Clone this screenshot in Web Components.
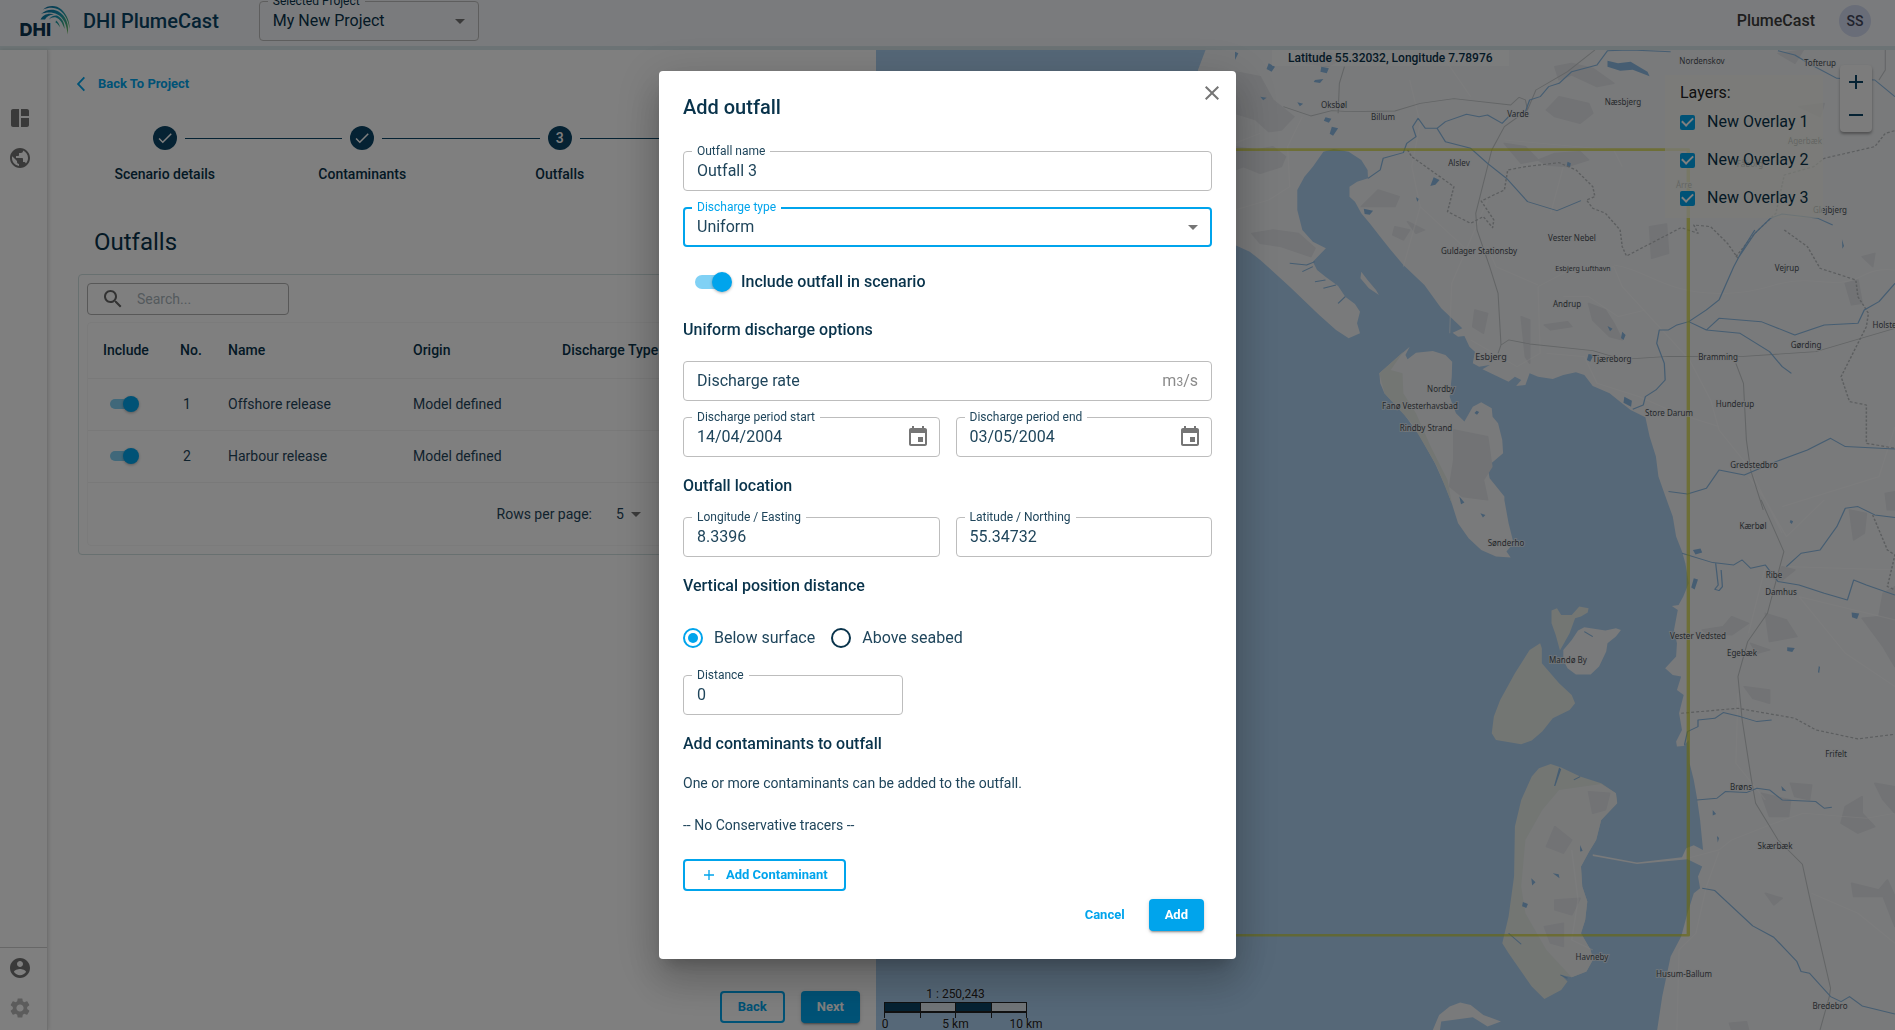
<!DOCTYPE html>
<html lang="en">
<head>
<meta charset="utf-8">
<title>DHI PlumeCast</title>
<style>
  :root {
    --ink: #09334b;
    --soft: #1f455b;
    --brand: #0b4566;
    --accent: #00a4ec;
    --icon: #757575;
    --line: #bdbdbd;
  }
  html, body { height: 100%; margin: 0; }
  body { font: 400 14px/20px Roboto, "Liberation Sans", sans-serif; color: var(--ink); background: #fff; overflow: hidden; }
</style>
</head>
<body>
<plume-app></plume-app>
<script>
const BASE = '*{box-sizing:border-box}svg{display:block}';

function define(name, html, setup) {
  const template = document.createElement('template');
  template.innerHTML = html;
  customElements.define(name, class extends HTMLElement {
    constructor() {
      super();
      this.attachShadow({ mode: 'open' }).append(template.content.cloneNode(true));
    }
    connectedCallback() { if (setup) setup(this, this.shadowRoot); }
  });
}

/* ---------- icon ---------- */
const ICONS = {
  dashboard: 'M11 21H5c-1.1 0-2-.9-2-2V5c0-1.1.9-2 2-2h6v18zm2 0h6c1.1 0 2-.9 2-2v-7h-8v9zm8-11V5c0-1.1-.9-2-2-2h-6v7h8z',
  globe: 'M12 2C6.48 2 2 6.48 2 12s4.48 10 10 10 10-4.48 10-10S17.52 2 12 2zm-1 17.93c-3.95-.49-7-3.85-7-7.93 0-.62.08-1.21.21-1.79L9 15v1c0 1.1.9 2 2 2v1.93zm6.9-2.54c-.26-.81-1-1.39-1.9-1.39h-1v-3c0-.55-.45-1-1-1H8v-2h2c.55 0 1-.45 1-1V7h2c1.1 0 2-.9 2-2v-.41c2.93 1.19 5 4.06 5 7.41 0 2.08-.8 3.97-2.1 5.39z',
  account: 'M12 2C6.48 2 2 6.48 2 12s4.48 10 10 10 10-4.48 10-10S17.52 2 12 2zm0 3c1.66 0 3 1.34 3 3s-1.34 3-3 3-3-1.34-3-3 1.34-3 3-3zm0 14.2c-2.5 0-4.71-1.28-6-3.22.03-1.99 4-3.08 6-3.08 1.99 0 5.97 1.09 6 3.08-1.29 1.94-3.5 3.22-6 3.22z',
  settings: 'M19.14 12.94c.04-.3.06-.61.06-.94 0-.32-.02-.64-.07-.94l2.03-1.58c.18-.14.23-.41.12-.61l-1.92-3.32c-.12-.22-.37-.29-.59-.22l-2.39.96c-.5-.38-1.03-.7-1.62-.94l-.36-2.54c-.04-.24-.24-.41-.48-.41h-3.84c-.24 0-.43.17-.47.41l-.36 2.54c-.59.24-1.13.57-1.62.94l-2.39-.96c-.22-.08-.47 0-.59.22L2.74 8.87c-.12.21-.08.47.12.61l2.03 1.58c-.05.3-.09.63-.09.94s.02.64.07.94l-2.03 1.58c-.18.14-.23.41-.12.61l1.92 3.32c.12.22.37.29.59.22l2.39-.96c.5.38 1.03.7 1.62.94l.36 2.54c.05.24.24.41.48.41h3.84c.24 0 .44-.17.47-.41l.36-2.54c.59-.24 1.13-.56 1.62-.94l2.39.96c.22.08.47 0 .59-.22l1.92-3.32c.12-.22.07-.47-.12-.61l-2.01-1.58zM12 15.6c-1.98 0-3.6-1.62-3.6-3.6s1.62-3.6 3.6-3.6 3.6 1.62 3.6 3.6-1.62 3.6-3.6 3.6z',
  search: 'M15.5 14h-.79l-.28-.27C15.41 12.59 16 11.11 16 9.5 16 5.91 13.09 3 9.5 3S3 5.91 3 9.5 5.91 16 9.5 16c1.61 0 3.09-.59 4.23-1.57l.27.28v.79l5 4.99L20.49 19l-4.99-5zm-6 0C7.01 14 5 11.99 5 9.5S7.01 5 9.5 5 14 7.01 14 9.5 11.99 14 9.5 14z',
  calendar: 'M17 12h-5v5h5v-5zM16 1v2H8V1H6v2H5c-1.11 0-1.99.9-1.99 2L3 19c0 1.1.89 2 2 2h14c1.1 0 2-.9 2-2V5c0-1.1-.9-2-2-2h-1V1h-2zm3 18H5V8h14v11z',
  arrow: 'M7 10l5 5 5-5z',
  chevron: 'M15.200 3.400L16.800 4.900 10 12l6.800 7.100-1.600 1.500L7 12z',
  check: 'M9 16.2L4.8 12l-1.4 1.4L9 19 21 7l-1.4-1.4z',
  plus: 'M13 4.500h-2V11H4.500v2H11v6.500h2V13h6.500v-2H13z',
  close: 'M19 6.41L17.59 5 12 10.59 6.41 5 5 6.41 10.59 12 5 17.59 6.41 19 12 13.41 17.59 19 19 17.59 13.41 12z'
};
define('ui-icon', `<style>${BASE}:host{display:inline-block;width:24px;height:24px;flex:none}svg{width:100%;height:100%;fill:currentColor}</style><svg viewBox="0 0 24 24" aria-hidden="true"><path/></svg>`,
  (host, root) => root.querySelector('path').setAttribute('d', ICONS[host.getAttribute('name')]));

/* ---------- outlined field ---------- */
define('ui-field', `<style>${BASE}
  :host{display:block;position:relative;height:40px;min-width:0;flex:1;color:var(--soft)}
  .box{display:flex;align-items:center;height:100%;border:1px solid var(--line);border-radius:4px;padding:0 13px}
  :host([focused]) .box{border:2px solid var(--accent);padding:0 12px}
  label{position:absolute;left:9px;top:-6px;padding:0 5px;font-size:12px;line-height:12px;background:var(--field-bg,#fff);white-space:nowrap}
  label:empty{display:none}
  :host([focused]) label{color:var(--accent)}
  input,select{all:unset;flex:1;min-width:0;font:inherit;font-size:16px;line-height:24px;color:inherit}
  input::placeholder{color:inherit;opacity:1}
  ui-icon{color:var(--icon)}
  ui-icon[name=arrow]{margin-right:-7px}
  ui-icon[name=calendar]{margin-right:-4px}
  ::slotted(*){color:#8b8b8b;font-size:16px}
</style><div class="box"><slot></slot></div><label for="c"></label>`,
  (host, root) => {
    const a = n => host.getAttribute(n) || '';
    root.querySelector('label').textContent = a('label');
    let control;
    if (host.hasAttribute('select')) {
      control = document.createElement('select');
      control.add(new Option(a('value')));
    } else {
      control = document.createElement('input');
      control.type = 'text';
      control.value = a('value');
      control.placeholder = a('hint');
      if (a('hint')) control.setAttribute('aria-label', a('hint'));
    }
    control.id = 'c';
    const box = root.querySelector('.box');
    box.prepend(control);
    const icon = host.hasAttribute('select') ? 'arrow' : a('icon');
    if (icon) box.insertAdjacentHTML('beforeend', `<ui-icon name="${icon}"></ui-icon>`);
  });

/* ---------- button ---------- */
define('ui-button', `<style>${BASE}
  :host{display:inline-block;flex:none}
  button{display:flex;align-items:center;justify-content:center;height:32px;padding:0 16px;border:2px solid transparent;border-radius:4px;background:none;color:var(--accent);font:700 13px/20px Roboto,sans-serif;cursor:pointer}
  :host([kind=outlined]) button{border-color:var(--accent)}
  :host([kind=filled]) button{background:var(--accent);color:#fff;padding:0 14px;box-shadow:0 3px 1px -2px rgba(0,0,0,.2),0 2px 2px rgba(0,0,0,.14),0 1px 5px rgba(0,0,0,.12)}
  ::slotted(ui-icon){width:16px;height:16px;margin-right:9px}
</style><button type="button"><slot></slot></button>`);

/* ---------- switch ---------- */
define('ui-switch', `<style>${BASE}
  :host{display:block}
  label{display:flex;align-items:center;font-weight:500;font-size:16px;line-height:24px}
  input{appearance:none;position:relative;flex:none;width:34px;height:14px;margin:12px;border-radius:7px;background:#80d1f5}
  input::before{content:"";position:absolute;right:-3px;top:-3px;width:20px;height:20px;border-radius:50%;background:var(--accent);box-shadow:0 1px 3px rgba(0,0,0,.3)}
  :host([small]) input{width:26px;height:10px;margin:7px}
  :host([small]) input::before{width:16px;height:16px}
</style><label><input type="checkbox" checked><slot></slot></label>`,
  (host, root) => { if (host.title) root.querySelector('input').setAttribute('aria-label', host.title); });

/* ---------- radio ---------- */
define('ui-radio', `<style>${BASE}
  :host{display:block;color:var(--soft)}
  label{display:flex;align-items:center;gap:11px;font-size:16px;line-height:24px}
  input{appearance:none;display:grid;place-items:center;width:20px;height:20px;margin:0;border:2px solid var(--ink);border-radius:50%}
  input:checked{border-color:var(--accent)}
  input:checked::before{content:"";width:10px;height:10px;border-radius:50%;background:var(--accent)}
</style><label><input type="radio"><slot></slot></label>`,
  (host, root) => { root.querySelector('input').checked = host.hasAttribute('checked'); });

/* ---------- header ---------- */
define('app-header', `<style>${BASE}
  :host{display:flex;align-items:center;height:50px;padding:0 24px 4px 20px;background:#f4f7fa;border-bottom:4px solid #d9e7ea;overflow:hidden;--field-bg:#f4f7fa}
  h1{margin:0 40px 0 13px;font-size:20px;line-height:24px;font-weight:500;color:var(--brand)}
  ui-field{flex:none;width:220px;--soft:#09334b}
  nav{margin-left:auto;display:flex;align-items:center;gap:24px;font-size:16px;font-weight:500;color:#3c3c3c}
  .avatar{display:grid;place-items:center;width:32px;height:32px;border:0;padding:0;border-radius:50%;background:#d3daf0;color:#43475c;font:500 14px/20px Roboto,sans-serif}
</style>
<svg width="50" height="34" viewBox="20 4 50 34" role="img" aria-label="DHI">
  <defs><linearGradient id="g" gradientUnits="userSpaceOnUse" x1="40" y1="10" x2="70" y2="34"><stop offset="0" stop-color="#0a6a9c"/><stop offset=".45" stop-color="#1496b8"/><stop offset=".7" stop-color="#3aa98a"/><stop offset="1" stop-color="#64b33a"/></linearGradient></defs>
  <g fill="url(#g)">
    <path d="M43 9.5C48 5.2 56 4.800 61.500 9.500 67 14.500 69.800 22 69.600 29 68.500 21.500 65.500 14.500 60 10.500 55 7 49 7.200 43 9.500z"/>
    <path d="M41 14C46 9.500 53 8.500 58.500 11.500 65.500 15.500 69.500 24 67.500 34.500 67 25 63.500 17.500 57.500 14.500 52 11.800 46 12.200 41 14z"/>
    <path d="M40.500 19.500C43 14.500 49 12.500 54 14.500 49.500 15 46.500 16.500 45 19.500z"/>
    <path d="M49 19.500C50.500 16.500 54 15 57 15.500 63 18.500 64.800 24 64.500 29 62.500 23 60 19 56 17.500 53.500 17 51 17.500 49 19.500z"/>
    <path d="M56 20.500C57.500 21.500 59.500 24 60 27.500 58.500 25 57.500 23.500 55.500 22.500z"/>
  </g>
  <text x="19.500" y="35.500" font-family="Inter" font-weight="800" font-size="18" fill="#0a3550">DHI</text>
</svg>
<h1>DHI PlumeCast</h1>
<ui-field label="Selected Project" value="My New Project" select></ui-field>
<nav><span>PlumeCast</span><button class="avatar" type="button">SS</button></nav>`);

/* ---------- side rail ---------- */
define('side-rail', `<style>${BASE}
  :host{display:flex;flex-direction:column;border-right:1px solid #e0e0e0;box-shadow:1px 0 4px rgba(0,0,0,.12);color:var(--icon);z-index:1}
  div{display:flex;flex-direction:column;gap:16px;padding:56px 8px 0}
  .end{margin-top:auto;padding-top:8px;padding-bottom:10px;border-top:1px solid #cfcfcf}
  button{all:unset;display:block;height:24px}
  button[disabled]{color:#b8b8b8}
</style>
<div><button type="button" aria-label="Projects"><ui-icon name="dashboard"></ui-icon></button><button type="button" aria-label="World"><ui-icon name="globe"></ui-icon></button></div>
<div class="end"><button type="button" aria-label="Account"><ui-icon name="account"></ui-icon></button><button type="button" disabled aria-label="Settings"><ui-icon name="settings"></ui-icon></button></div>`);

/* ---------- stepper ---------- */
define('step-item', `<style>${BASE}
  :host{flex:1;display:flex;flex-direction:column;align-items:center;gap:14px;font-weight:500}
  .row{display:flex;align-items:center;gap:8px;align-self:stretch}
  .row::before,.row::after{content:"";flex:1;height:1px;background:var(--brand)}
  :host([first]) .row::before,:host([last]) .row::after{background:none}
  i{display:grid;place-items:center;width:24px;height:24px;border-radius:50%;background:var(--brand);color:#fff;font-style:normal;font-size:14px}
  i ui-icon{width:18px;height:18px}
</style><div class="row"><i></i></div><slot></slot>`,
  (host, root) => {
    const n = host.getAttribute('n');
    root.querySelector('i').innerHTML = n ? n : '<ui-icon name="check"></ui-icon>';
  });

/* ---------- outfall table ---------- */
define('outfall-table', `<style>${BASE}
  :host{display:block;border:1px solid #d0e0e0;border-radius:4px;padding:8px}
  .search{display:flex;align-items:center;gap:12px;width:202px;height:32px;padding:0 13px;border:1px solid #b0b0b0;border-radius:4px;color:#666}
  input{all:unset;flex:1;min-width:0;font-size:14px}
  input::placeholder{color:#a9b4bb;opacity:1}
  .frame{margin-top:7px;border:1px solid #f6f6f6;border-radius:4px}
  table{width:100%;table-layout:fixed;border-collapse:collapse}
  th,td{height:52px;padding:0 0 0 15px;text-align:left;border-bottom:1px solid #f3f3f3;white-space:nowrap;font-weight:400}
  th{height:55px;font-weight:500}
  td{color:var(--soft)}
  td:nth-child(2){padding-left:18px}
  .foot{display:flex;align-items:center;justify-content:flex-end;height:62px;padding-right:202px;gap:24px;color:var(--soft)}
  .foot span{display:flex;align-items:center}
  select{all:unset;width:8px}
  .foot ui-icon{color:var(--icon)}
</style>
<div class="search"><ui-icon name="search"></ui-icon><input type="text" placeholder="Search..." aria-label="Search"></div>
<div class="frame">
<table>
  <colgroup><col style="width:77px"><col style="width:48px"><col style="width:185px"><col style="width:149px"><col></colgroup>
  <thead><tr><th>Include</th><th>No.</th><th>Name</th><th>Origin</th><th>Discharge Type</th></tr></thead>
  <tbody>
    <tr><td><ui-switch small title="Include Offshore release"></ui-switch></td><td>1</td><td>Offshore release</td><td>Model defined</td><td></td></tr>
    <tr><td><ui-switch small title="Include Harbour release"></ui-switch></td><td>2</td><td>Harbour release</td><td>Model defined</td><td></td></tr>
  </tbody>
</table>
<div class="foot"><label for="rows">Rows per page:</label><span><select id="rows"><option>5</option></select><ui-icon name="arrow"></ui-icon></span></div>
</div>`);

/* ---------- scenario panel ---------- */
define('scenario-panel', `<style>${BASE}
  :host{display:flex;flex-direction:column;padding:20px 0 7px}
  a{display:flex;align-items:center;gap:7px;height:28px;margin-left:23px;color:var(--accent);font-weight:700;font-size:13px;text-decoration:none}
  a ui-icon{width:20px;height:20px}
  .steps{display:flex;margin:28px 20px 0 18px}
  h2{margin:42px 46px 16px;font-size:24px;line-height:32px;font-weight:400}
  outfall-table{margin:0 16px 0 30px}
  footer{display:flex;justify-content:flex-end;gap:16px;margin:auto 16px 0}
</style>
<a href="#project"><ui-icon name="chevron"></ui-icon>Back To Project</a>
<div class="steps"><step-item first>Scenario details</step-item><step-item>Contaminants</step-item><step-item n="3">Outfalls</step-item><step-item n="4" last></step-item></div>
<h2>Outfalls</h2>
<outfall-table></outfall-table>
<footer><ui-button kind="outlined">Back</ui-button><ui-button kind="filled">Next</ui-button></footer>`);

/* ---------- map ---------- */
const TOWNS = [
  ['Nordenskov',1702,64],['Tofterup',1820,66],['Næsbjerg',1623,105],['Oksbøl',1334,108],['Billum',1383,120],['Varde',1518,117],
  ['Agerbæk',1805,144],['Alslev',1459,166],['Fåborg',1750,167],['Årre',1684,188],['Glejbjerg',1830,213],['Vester Nebel',1572,241],['Guldager Stationsby',1479,254],
  ['Esbjerg Lufthavn',1583,271,7],['Vejrup',1787,271],['Andrup',1567,307],['Holsted',1887,328],['Gørding',1806,348],['Esbjerg',1491,360,9],
  ['Tjæreborg',1612,362],['Bramming',1718,360],['Nordby',1441,392],['Hunderup',1735,407],['Fanø Vesterhavsbad',1420,409],['Store Darum',1669,416],
  ['Rindby Strand',1426,431],['Gredstedbro',1754,468],['Kærbøl',1753,529],['Sønderho',1506,546],['Ribe',1774,578],['Damhus',1781,595],
  ['Vester Vedsted',1698,639],['Egebæk',1742,656],['Mandø By',1568,663],['Frifelt',1836,757],['Brøns',1741,790],['Skærbæk',1775,849],
  ['Havneby',1592,960],['Husum-Ballum',1684,977],['Bredebro',1830,1009]
];
define('map-view', `<style>${BASE}
  :host{display:block;position:relative;overflow:hidden}
  .map{position:absolute;inset:0;width:100%;height:100%}
  .map text{font-family:"Noto Sans",sans-serif;text-anchor:middle;fill:#4b5157;paint-order:stroke;stroke:#f1f3f5;stroke-width:2px;stroke-opacity:.7}
  .pos{position:absolute;top:0;left:396px;padding:0 16px;height:16px;font:500 12px/16px Roboto,sans-serif;background:rgba(255,255,255,.5)}
  .layers{position:absolute;top:25px;right:72px;padding:7px 15px 0;width:158px;height:143px;background:rgba(246,248,240,.72);color:#222;font-size:16px;white-space:nowrap}
  .layers div{line-height:21px}
  .layers label{display:flex;align-items:center;gap:12px;height:38px;color:var(--ink);font-size:16px}
  .layers input{appearance:none;display:grid;place-items:center;flex:none;width:15px;height:15px;margin:0;border-radius:2px;background:var(--accent)}
  .layers input::before{content:"";width:5px;height:9px;margin-top:-3px;border:solid #fff;border-width:0 2px 2px 0;transform:rotate(45deg)}
  .zoom{position:absolute;top:15px;right:23px;display:flex;flex-direction:column;width:32px;height:67px;border-radius:4px;background:#f8f8f8;box-shadow:0 2px 3px rgba(0,0,0,.35)}
  .zoom button{all:unset;flex:1;display:grid;place-items:center}
  .scale{position:absolute;left:8px;bottom:0;width:143px;height:44px;text-align:center;color:#222;font:400 12px/16px Roboto,sans-serif;text-shadow:0 0 2px #cde}
  .bar{display:flex;height:11px;border:1px solid #222;border-width:1px 0 2px;background:#e3ebf0}
  .bar i{flex:1;border-left:1px solid #222;height:15px;background:linear-gradient(#e3ebf0 8px,transparent 8px)}
  .bar i:nth-child(odd){background:linear-gradient(var(--brand) 8px,transparent 8px)}
  .bar i:last-child{border-right:1px solid #222}
  .km{display:flex;justify-content:space-between;margin:5px -20px 0;line-height:12px}
  .km span{width:42px}
</style>
<svg class="map" viewBox="876 50 1019 980" preserveAspectRatio="xMidYMid slice">
  <rect x="876" y="50" width="1019" height="980" fill="#acd0f0"/>
  <g transform="translate(1235 0) scale(.4209 .3333)" stroke-linejoin="round">
    <path fill="#f2f4f6" d="M-70 150L-88 210-60 500-30 715 5 738 35 755 60 780 130 860 200 945 240 990 270 1015 297 1000 290 970 297 935 285 912 262 890 245 858 215 830 195 810 185 785 216 745 185 725 160 690 148 630 148 570 165 530 185 500 210 455 235 447 270 455 300 480 315 510 316 535 290 545 272 560 272 590 285 605 300 640 320 670 345 710 370 750 400 795 450 855 490 925 540 985 517 998 530 1010 545 1008 557 1040 570 1055 565 1090 580 1100 605 1095 588 1108 650 1145 665 1130 680 1140 668 1158 690 1155 700 1120 720 1130 755 1137 780 1125 810 1117 830 1125 850 1158 890 1180 915 1205 940 1230 975 1252 985 1310 1000 1370 1006 1430 1020 1480 1030 1515 1040 1550 1048 1610 1062 1655 1070 1690 1078 1750 1065 1790 1054 1815 1038 1818 1052 1830 1043 1890 1050 1930 1048 1970 1022 2005 1040 2025 1060 2030 1050 2070 1066 2085 1055 2140 1062 2190 1048 2225 1050 2240 1066 2238 1078 2220 1080 2290 1090 2340 1097 2390 1105 2460 1112 2550 1090 2536 1072 2545 1062 2572 955 2588 850 2563 850 2568 955 2592 1075 2578 1110 2600 1100 2630 1105 2665 1090 2680 1075 2740 1060 2810 1035 2870 1025 2930 1015 2990 1003 3090 1575 3090 1575 150z"/>
    <path fill="#f2f4f6" d="M415 1040L343 1120 345 1150 355 1180 400 1240 440 1310 475 1390 500 1460 515 1510 530 1570 555 1615 585 1650 620 1670 655 1673 645 1655 655 1640 660 1620 650 1570 640 1500 640 1490 605 1435 600 1400 637 1360 635 1320 625 1270 612 1250 610 1225 585 1207 565 1220 545 1265 525 1240 510 1190 515 1130 516 1085 500 1065 470 1053 430 1058 410 1078 405 1065zM300 815L315 840 335 870 342 885 318 865 298 835z"/>
    <path fill="#e6ece7" d="M400 1055L343 1120 355 1180 420 1270 480 1400 515 1510 505 1440 465 1340 430 1240 400 1180 398 1120 370 1110zM765 1825L775 1845 800 1845 818 1820 840 1825 838 1838 822 1850 808 1855 795 1900 772 1952 762 1905 752 1870 752 1832zM725 1930L729 1945 729 1990 770 2050 800 2085 808 2110 795 2130 755 2155 730 2195 705 2222 680 2233 620 2220 610 2200 615 2150 630 2100 665 2020 700 1950zM750 2292L775 2303 820 2330 870 2350 905 2380 908 2410 870 2460 858 2520 840 2558 822 2600 825 2660 837 2705 832 2760 822 2800 845 2850 850 2880 835 2915 800 2932 775 2925 790 2945 775 2970 735 2997 705 2960 650 2860 635 2830 650 2750 663 2630 665 2480 680 2400 705 2330 722 2305z"/>
    <path fill="#f2f4f6" d="M830 1882L880 1892 905 1885 917 1890 905 1910 885 1930 882 1955 865 2000 845 2024 810 2024 790 2005 780 1980 780 1950 800 1920 815 1892zM470 3090L485 3045 510 3020 535 3008 560 3015 590 3045 632 3065 600 3080 565 3052 490 3065 487 3090z"/>
    <path fill="#f0f2f3" d="M870 2352L905 2380 908 2410 870 2460 858 2520 840 2558 822 2600 825 2660 837 2705 832 2760 822 2800 845 2850 850 2880 835 2915 800 2932 740 2850 690 2740 680 2660 690 2520 730 2430 770 2370z"/>
    <g fill="#e4e6ea">
      <path d="M0 215L60 230 90 300 140 350 110 390 80 395 50 360 0 340zM0 440L50 450 90 440 120 470 110 500 60 520 20 500 0 510zM40 700L90 690 150 700 190 745 180 770 110 740 60 730zM160 165L230 160 250 180 220 200 170 190zM740 330L770 290 840 310 850 340 820 370 760 350zM640 430L690 440 720 480 680 490zM720 480L760 460 820 455 840 480 790 500 740 495zM760 200L800 190 850 205 900 250 860 260 800 225 770 240zM300 620L340 570 390 590 380 620zM380 680L415 690 400 720 375 705zM410 665L450 690 430 700zM985 680L1025 672 1030 760 990 775zM840 910L880 930 900 970 920 1020 890 1010 850 960zM735 975L790 965 800 980 750 990zM680 950L700 960 700 1090 690 1070zM570 930L600 940 590 1000 565 980zM520 1290L600 1310 610 1400 590 1440 600 1500 540 1490 510 1460 520 1380zM1450 850L1480 840 1490 910 1465 915zM1460 1530L1500 1540 1495 1600 1470 1620zM1110 1890L1160 1880 1180 1850 1220 1870 1180 1905 1120 1900zM1260 1840L1310 1860 1335 1910 1270 1925zM1210 2060L1270 2070 1270 2110 1230 2095zM1540 1780L1568 1760 1568 2000 1540 1940 1490 1855 1530 1850zM1225 1930L1270 1950 1240 1960zM1270 1735L1290 1725 1300 1700 1330 1710 1300 1740zM1250 2380L1320 2400 1315 2450 1270 2450zM1320 2350L1370 2355 1365 2400 1330 2390zM1450 2420L1490 2390 1490 2440 1520 2480 1480 2500 1440 2470zM1520 2350L1568 2360 1568 2440 1540 2400zM1465 2650L1530 2670 1550 2640 1568 2690 1568 2780 1540 2690 1470 2690zM1260 2680L1300 2695 1280 2715zM1175 3070L1215 3065 1220 3090 1180 3090zM840 2375L890 2380 880 2430 850 2440zM760 2700L820 2695 800 2745 760 2730zM735 2780L780 2770 780 2840 750 2830zM760 2480L800 2520 780 2560 740 2540zM1545 1480L1568 1475 1568 1530 1550 1530zM1340 320L1400 310 1390 350zM1290 160L1350 150 1330 190zM1490 770L1520 760 1515 800z" stroke="#e4e6ea" stroke-width="4"/>
    </g>
    <g fill="#8cbbe4">
      <path d="M80 190l15 10-8 15-12-8zM205 200l18 5-5 15-15-5zM190 240l20-3-8 12-15-3zM60 290l15 3-8 8zM215 352l14 4-6 12-12-6zM230 380l15 5-12 22-8-6zM148 307l14 4-8 8zM885 182l25 8 30-5 40 30 5 14-40-20-30 3-30-12zM472 532l14 8-10 14-12 4zM430 592l8 5-5 8zM306 626l22 6-8 12-12-2zM790 485l8 5-2 12-8-3zM920 995l8 10-5 15-6-6zM885 978l12 8-6 8zM840 1062l12 3-8 20-8-5zM925 1190l18 12-2 18-18-12zM1088 1650l18-4 4 12-16 6zM1090 1735l10 4-8 30-8-6zM1465 1838l18 3-5 16-12-5zM1312 1942l18 2-6 12-12-3zM1387 1998l3 3-2 18-3-2zM1320 1560l6 4-3 8-5-5zM583 1540l12 5-6 8zM704 2635l10 12-8 10zM755 2620l14 3 2 12zM684 2706l12 6-4 12-10-5zM1135 2430l8 12-8 5zM1145 2508l5 6-3 14zM1298 2358l12 16-10-2zM1442 718l5 20-4 8zM574 1232l6 4-5 8-6-5zM0 155l8 5-8 20zM533 1490l12 18-8 5z"/>
      <path d="M820 2535l6 18-6 2zM770 2303l-12 55 3 0 14-50z"/>
    </g>
    <g fill="none" stroke="#ffffff" stroke-width="3.500" opacity=".45">
      <path d="M0 630L80 600 130 560 125 440 160 350M415 240L440 370 420 500 440 620 560 760M440 620L400 800M560 290L500 180M510 1000L515 850 600 600M720 860L725 1060 670 1100 560 1020M600 740L620 800 720 855M900 800L780 820 720 860M900 795C980 810 1020 880 1150 880S1280 830 1390 845 1480 800 1568 810M900 800L920 860 1080 1080 1130 1200 1150 1290 1220 1400 1300 1600M640 420L900 450 920 500M740 1060L830 1070 860 1150 960 1190 1050 1240 1150 1280M780 500L750 640M780 890L840 890 910 950 975 930M1220 1430L1260 1500 1310 1610 1400 1500M1310 1700L1568 1710M1340 1790L1450 1960 1568 2060M1340 1790L1568 1860M1260 1700L1220 1900M1195 2080L1190 2290 1260 2400M1075 2575L1150 2550 1180 2520 1270 2475 1350 2440 1500 2455 1568 2440M1150 2555L1120 2660 1095 2800 1055 2850 1050 3090M1370 2680L1480 2740 1568 2830M800 2550L815 2700 800 2820 850 2850M0 430L60 400M1568 1280L1530 1430 1300 1520"/>
    </g>
    <g fill="none" stroke="#c6cacc" stroke-width="2.500">
      <path d="M115 320L180 348 230 332 270 335 380 333 440 310 520 296 655 315 675 292 690 300 695 330M855 150L790 215 715 270 695 330 640 380 610 450 572 640 575 690 605 800 625 880 632 1035M245 340L248 250 260 200M625 1060L632 1035 650 1020 700 1032 850 1052 920 1078 1030 1069 1200 1070 1380 1055 1568 985M1190 1090L1208 1150 1215 1320 1225 1410 1255 1530M1250 1500L1304 1655 1265 1840 1218 1925 1195 2030 1205 2160 1227 2340 1237 2410 1290 2520 1348 2593 1370 2720 1415 2965 1412 2990 1390 3090M1545 150L1545 210 1530 240"/>
    </g>
    <g fill="none" stroke="#b8bcbf" stroke-width="3.500" stroke-dasharray="7 5">
      <path d="M410 450L420 470 520 560 505 635 560 670 590 650 612 683 615 660 585 603 640 570 648 510 690 500 770 488 810 510 850 560 855 590 835 600 850 625 880 640 915 690 920 740 930 768 1060 683 1100 700 1090 675 1130 680 1170 730 1195 775M1190 770L1235 700 1285 640 1305 525 1375 500 1400 475 1520 440 1545 400 1568 392M1305 690L1360 740 1390 805 1475 840 1480 890 1505 940 1500 980 1440 1130 1460 1205 1500 1215 1500 1330 1568 1345M1060 2140L1195 2125 1330 2155 1380 2190 1480 2217 1568 2203M1515 1545L1550 1650 1568 1665 1550 1760 1568 1770"/>
    </g>
    <g fill="none" stroke="#8cbbe4" stroke-width="3">
      <path d="M316 535L345 510 352 475 400 458 408 430 430 410 422 380 435 355 452 385 480 385 500 365 550 343 580 350 600 345 635 370 650 350 690 335 700 300 725 290 745 260 770 250 800 215 860 195 885 152 940 150 1035 155M480 385L500 425 560 445 600 490 645 535 695 605 765 632 822 602M1290 152L1330 165 1370 195 1430 235 1520 240 1568 290M1195 775L1235 700 1272 655 1300 642 1385 655 1420 675M1235 690L1210 740 1185 800 1150 900 1120 930 1078 965 1050 975 1030 990 1008 990 1002 1030 1020 1090 1022 1140 1000 1170 975 1190 970 1215 945 1228M1078 965L1120 990 1150 955 1250 965 1330 1005 1400 975 1480 970 1495 930 1530 905 1568 850M1120 990L1200 1000 1270 1055 1300 1100 1322 1120M1030 1475L1075 1482 1120 1465 1150 1410 1210 1425 1285 1385 1360 1350 1415 1315 1450 1340 1568 1347M1062 1660L1135 1688 1185 1695 1205 1680 1225 1705 1260 1695 1290 1745 1340 1755 1400 1780 1455 1800 1470 1740 1500 1755 1568 1785M1142 1690L1148 1755 1140 1768 1150 1772 1158 1760 1155 1710M1310 1700L1345 1660 1390 1650 1430 1580 1450 1525 1480 1520 1520 1545 1568 1553M1068 2235L1075 2195 1100 2180 1100 2160 1140 2155 1160 2138 1200 2150 1240 2165 1275 2160M1097 2400L1145 2395 1165 2375 1215 2378 1240 2365 1270 2370 1300 2400 1380 2405 1400 2425 1418 2422M1110 2665L1140 2672 1230 2778 1280 2812 1335 2885 1345 2915 1365 2920 1415 2990 1440 3005 1460 2990 1490 3018 1568 3042M130 790L170 795 190 785M160 815L185 800M190 845L215 840M210 865L240 855M245 910L262 890M830 1895L850 1910M805 2340L820 2330M650 2800L680 2833M773 2925L790 2935"/>
    </g>
    <path fill="none" stroke="#d0d01c" stroke-opacity=".62" stroke-width="8" d="M-700 449H1077V2806H-700"/>
  </g>
  <g class="towns"></g>
</svg>
<div class="pos">Latitude 55.32032, Longitude 7.78976</div>
<div class="layers"><div>Layers:</div>
  <label><input type="checkbox" checked>New Overlay 1</label>
  <label><input type="checkbox" checked>New Overlay 2</label>
  <label><input type="checkbox" checked>New Overlay 3</label></div>
<div class="zoom">
  <button type="button" aria-label="Zoom in"><svg width="14" height="14" viewBox="0 0 14 14"><path d="M7 0v14M0 7h14" stroke="#0b4566" stroke-width="2"/></svg></button>
  <button type="button" aria-label="Zoom out"><svg width="14" height="14" viewBox="0 0 14 14"><path d="M0 7h14" stroke="#0b4566" stroke-width="2"/></svg></button>
</div>
<div class="scale"><div>1 : 250,243</div><div class="bar"><i></i><i></i><i></i><i></i></div><div class="km"><span>0</span><span>5 km</span><span>10 km</span></div></div>`,
  (host, root) => {
    const g = root.querySelector('.towns');
    for (const [name, x, y, size = 8] of TOWNS) {
      const t = document.createElementNS('http://www.w3.org/2000/svg', 'text');
      t.setAttribute('x', x); t.setAttribute('y', y); t.setAttribute('font-size', size);
      t.textContent = name;
      g.append(t);
    }
  });

/* ---------- dialog ---------- */
define('outfall-dialog', `<style>${BASE}
  :host{position:fixed;inset:0;z-index:10;display:grid;place-items:center;background:rgba(0,0,0,.5)}
  section{position:relative;width:577px;max-width:100%;padding:24px 24px 28px;background:#fff;border-radius:4px;box-shadow:0 11px 15px -7px rgba(0,0,0,.2),0 24px 38px 3px rgba(0,0,0,.14),0 9px 46px 8px rgba(0,0,0,.12)}
  h2{margin:0 0 32px;font-size:20px;line-height:24px;font-weight:500}
  h3{margin:16px 0 18px;font-size:16px;line-height:26px;font-weight:500}
  .close{all:unset;position:absolute;top:10px;right:12px;color:var(--icon)}
  ui-field{flex:none;margin-bottom:16px}
  .pair{display:flex;gap:16px}
  .pair ui-field{flex:1}
  .pair+h3{margin-top:0}
  .switch{display:flex;align-items:center;height:38px}
  .radios{display:flex;align-items:center;gap:16px;height:42px;margin-bottom:16px}
  .short{width:220px}
  .short+h3{margin-bottom:16px}
  p{margin:0 0 22px;line-height:20px;color:var(--soft)}
  p+p{margin-bottom:24px}
  small{font-size:12px}
  .actions{display:flex;justify-content:flex-end;gap:6px;margin-top:8px;padding-right:8px}
</style>
<section role="dialog" aria-label="Add outfall">
  <button class="close" type="button" aria-label="Close"><ui-icon name="close"></ui-icon></button>
  <h2>Add outfall</h2>
  <ui-field label="Outfall name" value="Outfall 3"></ui-field>
  <ui-field label="Discharge type" value="Uniform" select focused></ui-field>
  <div class="switch"><ui-switch>Include outfall in scenario</ui-switch></div>
  <h3>Uniform discharge options</h3>
  <ui-field hint="Discharge rate"><span>m<small>3</small>/s</span></ui-field>
  <div class="pair"><ui-field label="Discharge period start" value="14/04/2004" icon="calendar"></ui-field><ui-field label="Discharge period end" value="03/05/2004" icon="calendar"></ui-field></div>
  <h3>Outfall location</h3>
  <div class="pair"><ui-field label="Longitude / Easting" value="8.3396"></ui-field><ui-field label="Latitude / Northing" value="55.34732"></ui-field></div>
  <h3>Vertical position distance</h3>
  <div class="radios"><ui-radio checked>Below surface</ui-radio><ui-radio>Above seabed</ui-radio></div>
  <ui-field class="short" label="Distance" value="0"></ui-field>
  <h3>Add contaminants to outfall</h3>
  <p>One or more contaminants can be added to the outfall.</p>
  <p>-- No Conservative tracers --</p>
  <ui-button kind="outlined"><ui-icon name="plus"></ui-icon>Add Contaminant</ui-button>
  <div class="actions"><ui-button>Cancel</ui-button><ui-button kind="filled">Add</ui-button></div>
</section>`);

/* ---------- app ---------- */
define('plume-app', `<style>${BASE}
  :host{display:flex;flex-direction:column;height:100vh}
  main{flex:1;min-height:0;display:grid;grid-template-columns:48px 828fr 1019fr}
</style>
<app-header></app-header>
<main><side-rail></side-rail><scenario-panel></scenario-panel><map-view></map-view></main>
<outfall-dialog></outfall-dialog>`);
</script>
</body>
</html>
